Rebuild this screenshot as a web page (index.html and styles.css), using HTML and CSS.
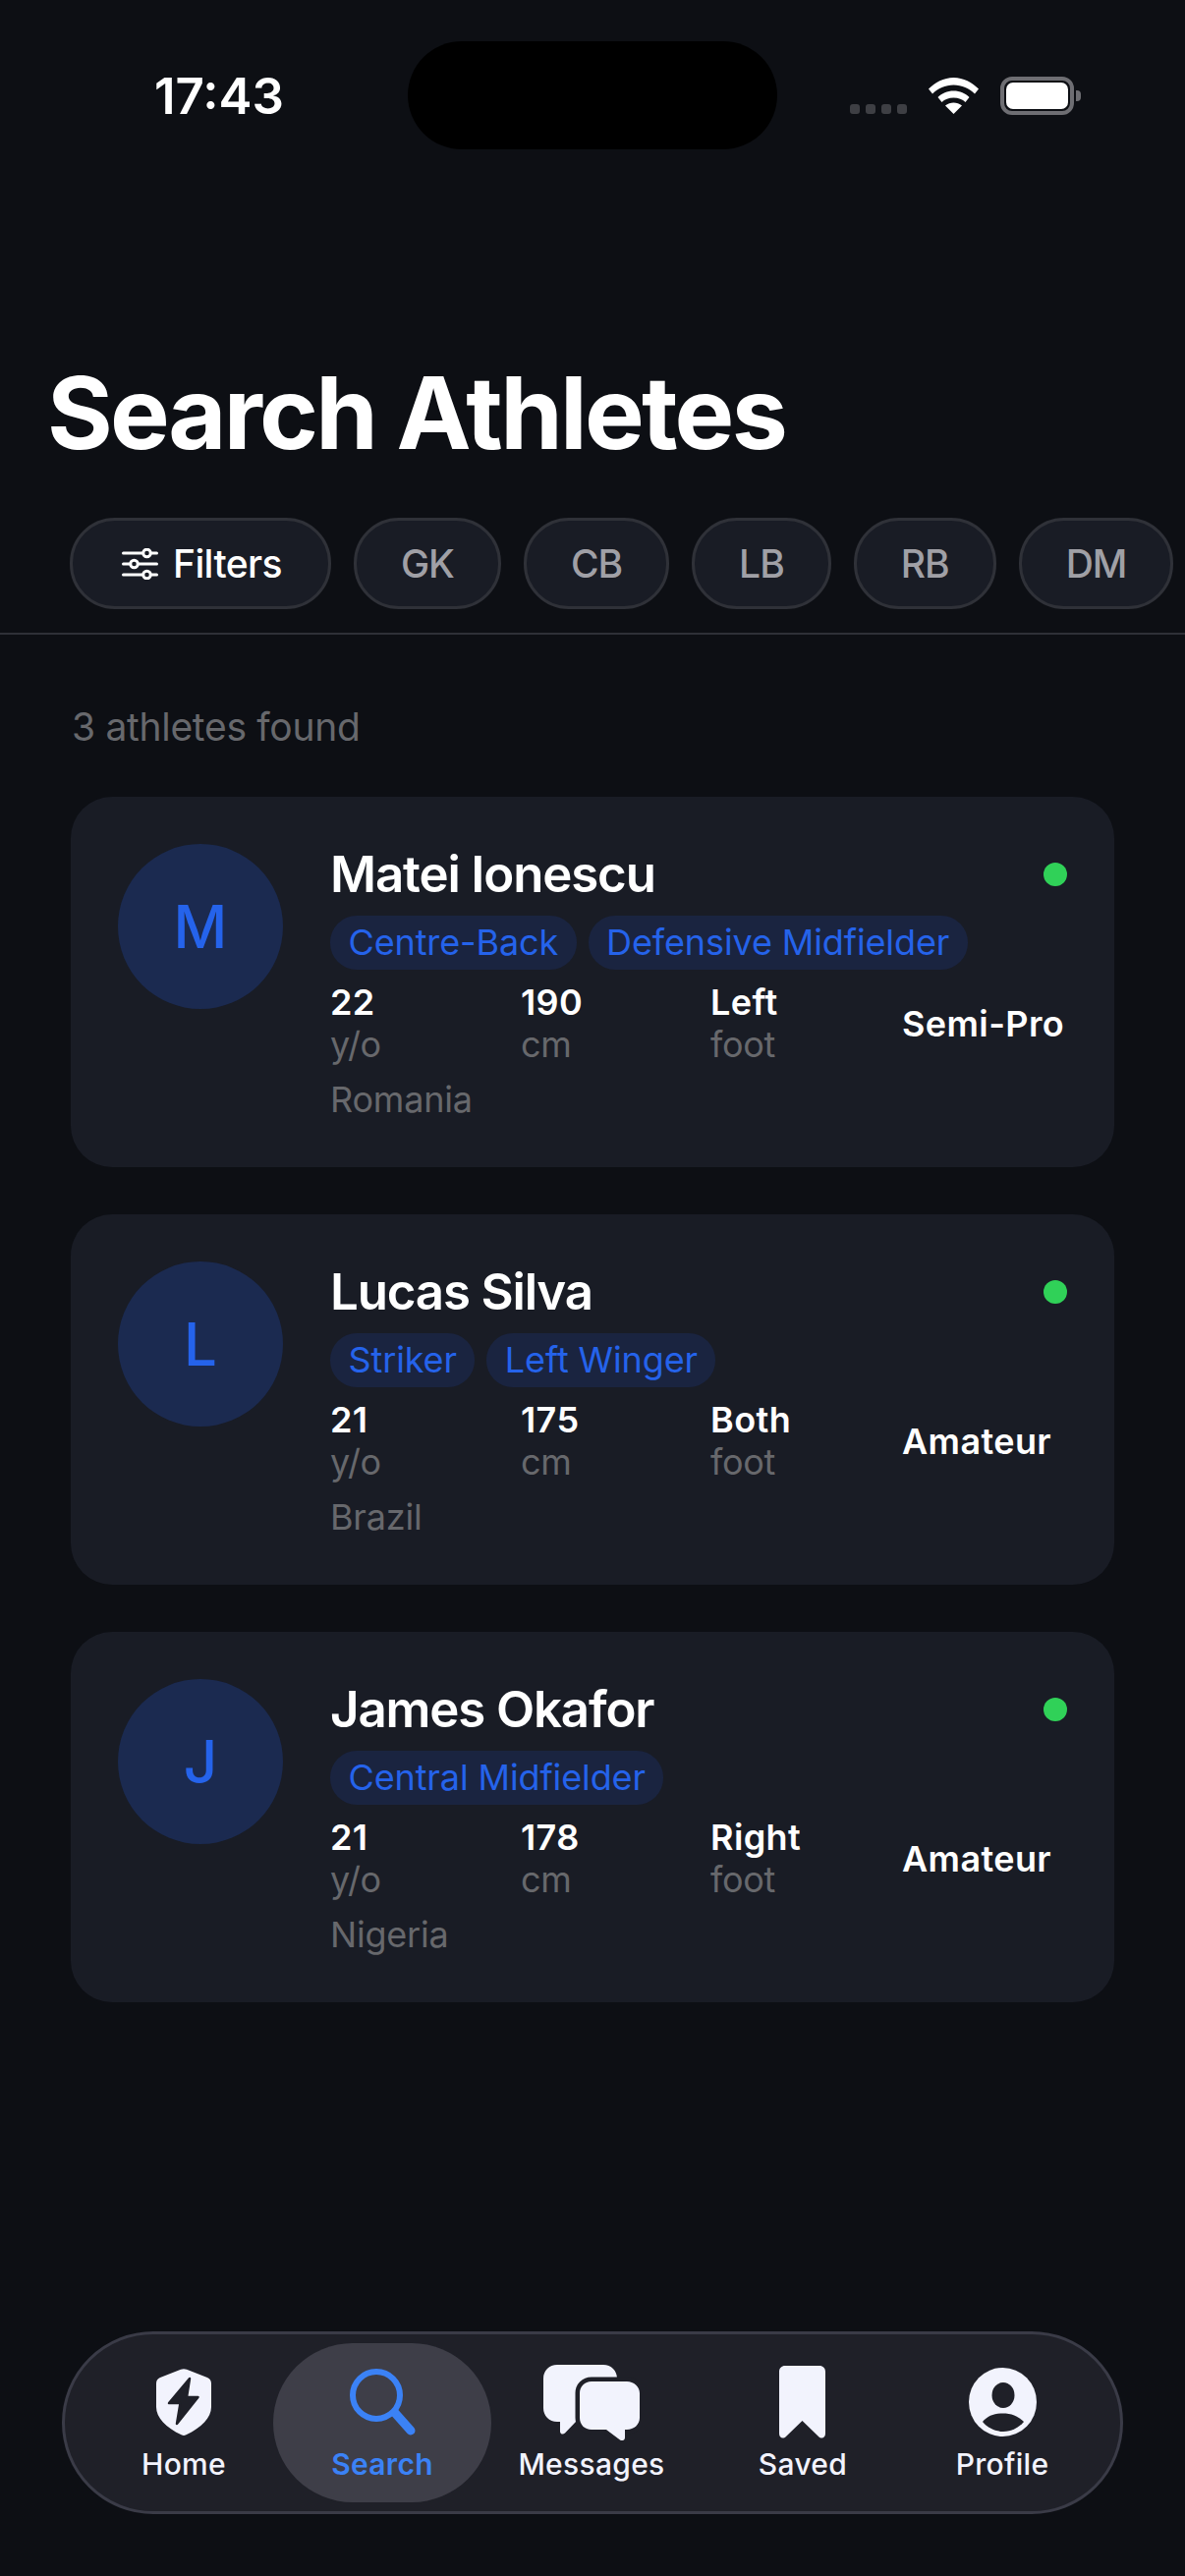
FILE: index.html
```html
<!DOCTYPE html>
<html lang="en">
<head>
<meta charset="utf-8">
<title>Search Athletes</title>
<link rel="stylesheet" href="styles.css">
</head>
<body>
<div class="screen">
  <div class="status">
    <div class="time">17:43</div>
    <div class="island"></div>
    <div class="status-right">
      <div class="signal"><i></i><i></i><i></i><i></i></div>
      <svg class="wifi" width="51" height="37" viewBox="0 0 51 37"><path d="M0 11.500C6.500 5 15.500 0 25.500 0S44.500 5 51 11.500L47 16.500C41.500 11 34 7.500 25.500 7.500S9.500 11 4 16.500Z"/><path d="M9.500 20C13.500 16 19 13.500 25.500 13.500S37.500 16 41.500 20L37.500 25C34.500 22 30.500 20.500 25.500 20.500S16.500 22 13.500 25Z"/><path d="M17 28.500C19.500 26.500 22.500 25.500 25.500 25.500S31.500 26.500 34 28.500L25.500 37Z"/></svg>
      <div class="battery"><div class="battery-fill"></div></div>
    </div>
  </div>

  <h1 class="title">Search Athletes</h1>

  <div class="chips">
    <div class="chip chip-filter">
      <svg width="37" height="32" viewBox="0 0 37 32"><g fill="none" stroke="#fff" stroke-width="3"><path d="M1.500 5H20.500M30.500 5H35.500M1.500 16H7.500M17.500 16H35.500M1.500 27H20.500M30.500 27H35.500" stroke-linecap="round"/><circle cx="25.500" cy="5" r="3.800"/><circle cx="12.500" cy="16" r="3.800"/><circle cx="25.500" cy="27" r="3.800"/></g></svg>
      <span>Filters</span>
    </div>
    <div class="chip">GK</div>
    <div class="chip">CB</div>
    <div class="chip">LB</div>
    <div class="chip">RB</div>
    <div class="chip">DM</div>
  </div>

  <main class="results">
    <p class="count">3 athletes found</p>

    <article class="card">
      <div class="avatar">M</div>
      <div class="info">
        <div class="name-row"><h2 class="name">Matei Ionescu</h2><span class="dot"></span></div>
        <div class="tags"><span class="tag">Centre-Back</span><span class="tag">Defensive Midfielder</span></div>
        <div class="stats">
          <div><b>22</b><small>y/o</small></div>
          <div><b>190</b><small>cm</small></div>
          <div><b>Left</b><small>foot</small></div>
          <div class="level">Semi-Pro</div>
        </div>
        <div class="country">Romania</div>
      </div>
    </article>

    <article class="card">
      <div class="avatar">L</div>
      <div class="info">
        <div class="name-row"><h2 class="name">Lucas Silva</h2><span class="dot"></span></div>
        <div class="tags"><span class="tag">Striker</span><span class="tag">Left Winger</span></div>
        <div class="stats">
          <div><b>21</b><small>y/o</small></div>
          <div><b>175</b><small>cm</small></div>
          <div><b>Both</b><small>foot</small></div>
          <div class="level">Amateur</div>
        </div>
        <div class="country">Brazil</div>
      </div>
    </article>

    <article class="card">
      <div class="avatar">J</div>
      <div class="info">
        <div class="name-row"><h2 class="name">James Okafor</h2><span class="dot"></span></div>
        <div class="tags"><span class="tag">Central Midfielder</span></div>
        <div class="stats">
          <div><b>21</b><small>y/o</small></div>
          <div><b>178</b><small>cm</small></div>
          <div><b>Right</b><small>foot</small></div>
          <div class="level">Amateur</div>
        </div>
        <div class="country">Nigeria</div>
      </div>
    </article>
  </main>

  <nav class="tabbar">
    <div class="tab">
      <div class="tab-icon"><svg width="56" height="68" viewBox="0 0 56 68"><path d="M25 .8C27 0 29 0 31 .8L52 9C54.500 10 56 12 56 15V39C56 50 46 60 30.500 67.300C28.500 68.200 27.500 68.200 25.500 67.300C10 60 0 50 0 39V15C0 12 1.500 10 4 9Z" fill="#f2f3fd"/><path d="M34 10 13 35H24.500L21 56 42.500 29H31Z" fill="#1f2028" stroke="#1f2028" stroke-width="2.500" stroke-linejoin="round"/></svg></div>
      <span>Home</span>
    </div>
    <div class="tab tab-active">
      <div class="tab-icon"><svg width="67" height="68" viewBox="0 0 67 68"><circle cx="27" cy="27" r="24" fill="none" stroke="#3b82f6" stroke-width="6"/><path d="M46 45 62 63" fill="none" stroke="#3b82f6" stroke-width="9" stroke-linecap="round"/></svg></div>
      <span>Search</span>
    </div>
    <div class="tab">
      <div class="tab-icon"><svg width="98" height="77" viewBox="0 0 98 77"><path d="M14 0H61C69 0 75 6 75 14V44C75 52 69 58 61 58H33L22 69.500C20 71.500 17 70.500 17 68V58H14C6 58 0 52 0 44V14C0 6 6 0 14 0Z" fill="#f2f3fd"/><path d="M49 17H85C92 17 98 22 98 29V54C98 61 92 66 85 66H83V74C83 77 80 78 78 76.500L64 66H49C42 66 37 61 37 54V29C37 22 42 17 49 17Z" fill="#f2f3fd" stroke="#1f2028" stroke-width="9" paint-order="stroke"/></svg></div>
      <span>Messages</span>
    </div>
    <div class="tab">
      <div class="tab-icon"><svg width="47" height="74" viewBox="0 0 47 74"><path d="M6 0H41C44.500 0 47 2.500 47 6V69C47 73.500 43 75 40 72L23.500 56 7 72C4 75 0 73.500 0 69V6C0 2.500 2.500 0 6 0Z" fill="#f2f3fd"/></svg></div>
      <span>Saved</span>
    </div>
    <div class="tab">
      <div class="tab-icon"><svg width="69" height="70" viewBox="0 0 69 70"><ellipse cx="34.500" cy="35" rx="34.500" ry="35" fill="#f2f3fd"/><ellipse cx="35" cy="28" rx="11.500" ry="13" fill="#1f2028"/><path d="M14 55C19 49 26 46.500 34.500 46.500S50 49 56 55C51 61 43 65 35 65S19 61 14 55Z" fill="#1f2028"/></svg></div>
      <span>Profile</span>
    </div>
  </nav>
</div>
</body>
</html>
```

FILE: styles.css
```css
* { box-sizing: border-box; }
html, body { margin: 0; padding: 0; }
body { background: #0d0f14; font-family: Inter, "Liberation Sans", sans-serif; color: #fff; }

.screen { width: 1206px; height: 2622px; display: flex; flex-direction: column; overflow: hidden; position: relative; }

.status { height: 170px; padding: 0 113px 0 157px; display: flex; justify-content: space-between; align-items: flex-start; position: relative; }
.time { font-size: 51px; font-weight: 600; line-height: 62px; margin-top: 67px; }
.island { position: absolute; left: 415px; top: 42px; width: 376px; height: 110px; border-radius: 55px; background: #000; }
.status-right { display: flex; align-items: flex-start; margin-top: 78px; }
.signal { display: flex; gap: 6px; margin-top: 28px; margin-right: 22px; }
.signal i { width: 10px; height: 10px; border-radius: 3px; background: #3e3f44; }
.wifi { fill: #fff; margin-top: 1px; margin-right: 22px; }
.battery { width: 75px; height: 39px; border: 4px solid #6e6e73; border-radius: 12px; padding: 2px; position: relative; }
.battery::after { content: ""; position: absolute; right: -11px; top: 10px; width: 5px; height: 11px; border-radius: 0 4px 4px 0; background: #6e6e73; }
.battery-fill { width: 100%; height: 100%; border-radius: 7px; background: #fff; }

.title { margin: 189px 0 0 48px; font-size: 102px; line-height: 122px; font-weight: 700; letter-spacing: -2.700px; }

.chips { display: flex; gap: 23px; padding: 0 0 24px 71px; margin-top: 46px; overflow: hidden; border-bottom: 2px solid #2e3037; }
.chip { flex: none; height: 93px; padding: 0 45px; display: flex; align-items: center; gap: 15px; border: 3px solid #2f3138; border-radius: 46px; background: #191c25; color: #a0a0a6; font-size: 39px; font-weight: 500; letter-spacing: -1px; }
.chip-filter { padding: 0 47px 0 50px; color: #fff; letter-spacing: -.6px; }

.results { padding: 0 72px; }
.count { margin: 70px 0 48px 1px; font-size: 39px; line-height: 47px; color: #67686c; letter-spacing: -.3px; }

.card { display: flex; gap: 48px; height: 377px; margin-bottom: 48px; padding: 48px; border-radius: 42px; background: #191c25; }
.avatar { flex: none; width: 168px; height: 168px; border-radius: 50%; background: #1b2a50; color: #2563eb; font-size: 60px; font-weight: 500; display: flex; align-items: center; justify-content: center; }
.info { flex: 1; min-width: 0; }
.name-row { display: flex; justify-content: space-between; align-items: center; }
.name { margin: 0; font-size: 51px; line-height: 62px; font-weight: 600; letter-spacing: -1.150px; }
.dot { width: 24px; height: 24px; border-radius: 50%; background: #30d158; }
.tags { display: flex; gap: 12px; margin-top: 11px; }
.tag { height: 55px; line-height: 55px; padding: 0 18.500px; border-radius: 27px; background: #1a2440; color: #2563eb; font-size: 36px; letter-spacing: -.12px; }
.stats { display: grid; grid-template-columns: 194px 193px 193px auto; align-items: center; margin-top: 12px; }
.stats b { display: block; font-size: 36px; line-height: 43px; font-weight: 600; letter-spacing: .4px; }
.stats small { display: block; font-size: 36px; line-height: 43px; color: #67686c; letter-spacing: -.3px; }
.level { margin-left: 2px; font-size: 36px; font-weight: 600; white-space: nowrap; letter-spacing: .4px; }
.country { margin-top: 12px; font-size: 36px; line-height: 44px; color: #67686c; letter-spacing: -.2px; }

.tabbar { margin: auto 63px 63px; height: 186px; padding: 0 12px; display: grid; grid-template-columns: 218px 186px 240px 190px 216px; align-items: center; justify-items: center; border: 3px solid #3a3b47; border-radius: 93px; background: #1f2028; }
.tab { display: flex; flex-direction: column; align-items: center; justify-content: flex-end; height: 162px; padding-bottom: 21px; gap: 6px; font-size: 30px; line-height: 36px; font-weight: 500; color: #f2f3fd; white-space: nowrap; letter-spacing: .3px; }
.tab-icon { height: 78px; display: flex; align-items: center; justify-content: center; }
.tab-active { width: 222px; border-radius: 81px; background: #3e3e48; color: #3b82f6; font-weight: 600; }
```
